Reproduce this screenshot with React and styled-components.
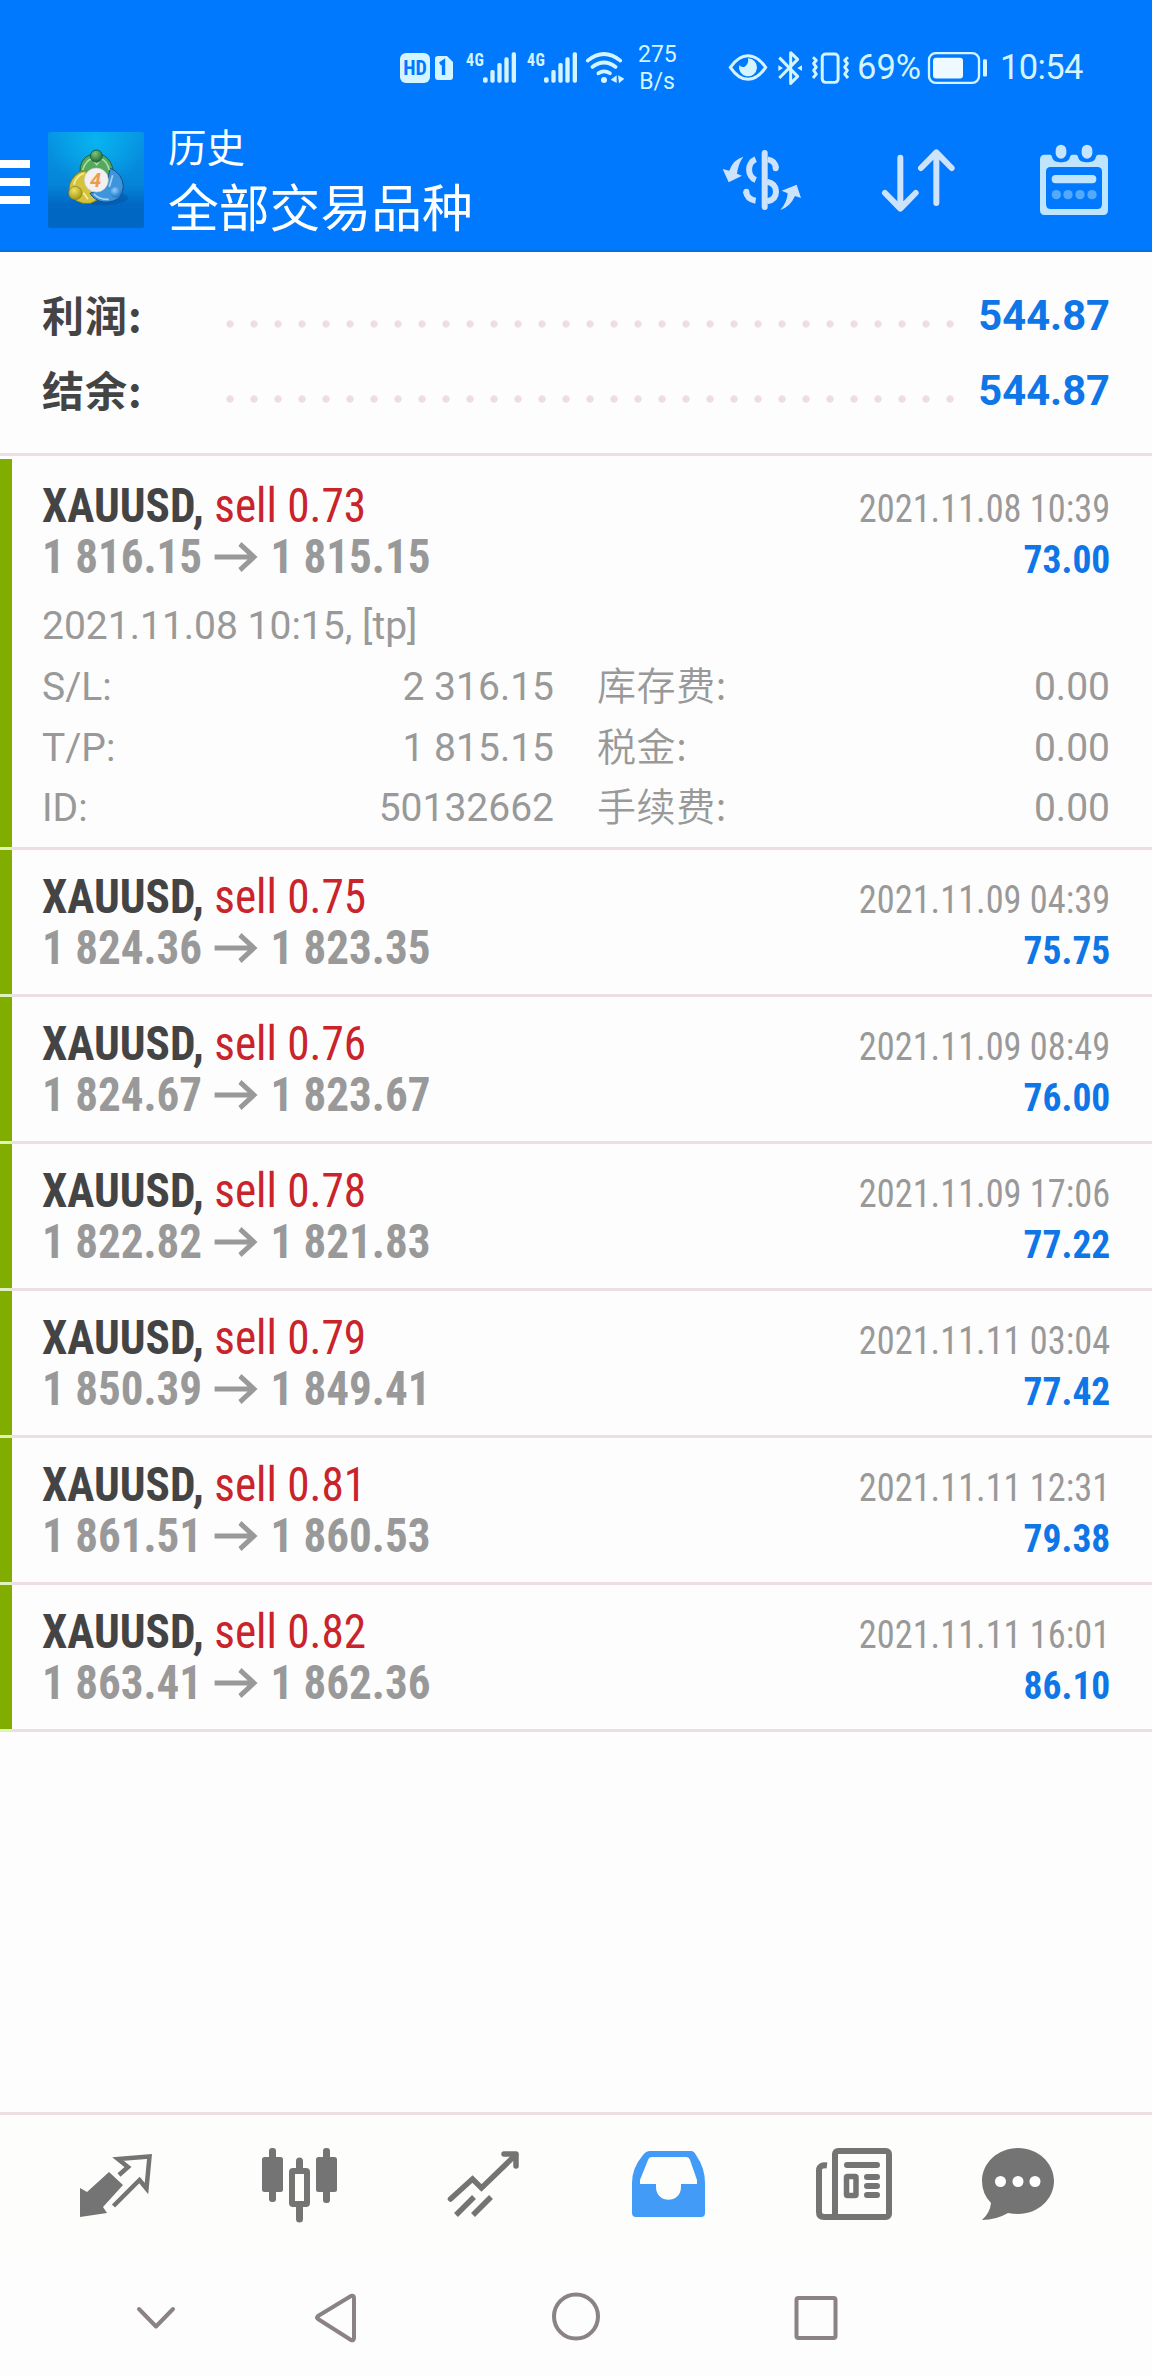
import styled, { createGlobalStyle } from "styled-components";

const GlobalStyle = createGlobalStyle`
  * {
    box-sizing: border-box;
  }
  body {
    margin: 0;
    background-color: #fdfdfd;
    font-family: Roboto, "Noto Sans CJK SC", sans-serif;
  }
  svg {
    display: block;
    flex: none;
    overflow: visible;
  }
`;

const Screen = styled.div`
  width: 1152px;
  height: 2376px;
  display: flex;
  flex-direction: column;
  overflow: hidden;
`;

const Header = styled.header`
  height: 252px;
  background-color: #0079ff;
  border-bottom: 2px solid #0670e0;
`;

const StatusBar = styled.div`
  height: 110px;
  padding: 25px 0 0 400px;
  display: flex;
  align-items: center;
  color: #d4f4ff;
`;

const Slot = styled.div`
  flex: none;
  width: ${(props) => props.$width}px;
  margin-left: ${(props) => props.$gap || 0}px;
  font-size: ${(props) => props.$size || 34.5}px;
  line-height: 1;
  white-space: nowrap;
`;

const Clock = styled(Slot)`
  letter-spacing: -0.6px;
`;

const HdBadge = styled.div`
  width: 30px;
  height: 30px;
  border-radius: 6px;
  background-color: #d4f4ff;
  color: #0079ff;
  font-size: 20px;
  font-weight: 700;
  font-stretch: 75%;
  line-height: 31px;
  text-align: center;
`;

const NetLabel = styled.div`
  padding-bottom: 17px;
  font-weight: 700;
  font-stretch: 75%;
  letter-spacing: 0.5px;
  transform: scaleX(0.84);
  transform-origin: left;
`;

const Speed = styled.div`
  text-align: center;
  line-height: 27px;
`;

const AppBar = styled.div`
  height: 140px;
  display: flex;
  align-items: center;
`;

const Burger = styled.div`
  width: 30px;
  display: grid;
  gap: 10px;
  padding-top: 4px;
  i {
    height: 8px;
    background-color: #fff;
  }
`;

const Logo = styled.svg`
  margin-left: 18px;
`;

const Titles = styled.div`
  width: 579px;
  padding: 0 0 10px 24px;
  color: #fff;
  font-family: "Noto Sans CJK SC", sans-serif;
  line-height: 60px;
`;

const Caption = styled.div`
  font-size: 38.5px;
`;

const Title = styled.div`
  font-size: 50.8px;
`;

const Actions = styled.div`
  display: flex;
  align-items: center;
  gap: 83px;
  svg:nth-child(2) {
    margin: 0 2px 0 -2px;
  }
`;

const Summary = styled.section`
  height: 204px;
  padding: 26px 42px 0;
  border-bottom: 3px solid #eedde3;
`;

const SummaryRow = styled.div`
  height: 75px;
  display: flex;
  align-items: center;
`;

const SummaryLabel = styled.div`
  width: 176px;
  padding-bottom: 4px;
  color: #444;
  font: 700 42px/71px "Noto Sans CJK SC", sans-serif;
  letter-spacing: 1px;
`;

const Dots = styled.div`
  width: 744px;
  height: 8px;
  margin-top: 16px;
  background: radial-gradient(circle, #eedde3 3.3px, transparent 4px) 0 0 / 24px 8px;
`;

const SummaryValue = styled.div`
  flex: 1;
  color: #0e76e6;
  font-size: 41.7px;
  font-weight: 700;
  text-align: right;
`;

const Deals = styled.section`
  flex: 1;
  padding-top: 3px;
`;

const Deal = styled.article`
  height: ${(props) => (props.$open ? 391 : 147)}px;
  padding: 21px 42px 0 30px;
  border-left: 12px solid #80ad00;
  position: relative;
  &::after {
    content: "";
    position: absolute;
    left: -12px;
    right: 0;
    bottom: 0;
    height: 3px;
    background: linear-gradient(to right, #def2bd 12px, #eedde3 12px);
  }
`;

const Line = styled.div`
  height: 51px;
  line-height: 51px;
  display: flex;
  align-items: baseline;
  justify-content: space-between;
  white-space: nowrap;
`;

const Condensed = styled.span`
  display: inline-flex;
  align-items: baseline;
  white-space: pre;
  font-size: ${(props) => props.$size || 48}px;
  font-weight: ${(props) => (props.$bold ? 700 : 400)};
  font-stretch: 75%;
  color: ${(props) => props.$color};
  transform: scaleX(${(props) => props.$scale || 0.938});
  transform-origin: ${(props) => (props.$right ? "right" : "left")};
`;

const Side = styled.span`
  color: #c9232b;
  font-weight: 450;
`;

const Arrow = styled.svg`
  margin: 0 15px 0 13px;
  align-self: center;
`;

const Details = styled.div`
  padding-top: 14px;
  color: #999;
  font-size: 39px;
  line-height: 60.8px;
`;

const DetailGrid = styled.div`
  display: grid;
  grid-template-columns: 1fr 1fr;
  column-gap: 44px;
`;

const Detail = styled.div`
  height: 60.8px;
  display: flex;
  justify-content: space-between;
  align-items: baseline;
`;

const FeeLabel = styled.span`
  margin-left: -1px;
  font-family: "Noto Sans CJK SC", sans-serif;
  font-weight: 350;
  line-height: 40px;
  letter-spacing: 0.6px;
`;

const TabBar = styled.nav`
  height: 147px;
  padding: 31px 0 0 76px;
  display: flex;
  gap: 104px;
  border-top: 3px solid #eedde3;
  background-color: #fdfdfb;
  color: #747474;
`;

const Tab = styled.svg`
  width: 80px;
  height: 78px;
  margin-left: ${(props) => props.$shift || 0}px;
`;

const SystemNav = styled.nav`
  height: 117px;
  padding: 33px 0 0 131px;
  display: flex;
`;

const SystemIcon = styled.svg`
  width: 50px;
  height: 50px;
  margin-left: ${(props) => props.$gap || 0}px;
  fill: none;
  stroke: #8a8283;
  stroke-width: 4;
  stroke-linecap: round;
  stroke-linejoin: round;
`;

const deals = [
  {
    volume: "0.73", from: "1 816.15", to: "1 815.15", time: "2021.11.08 10:39", profit: "73.00",
    opened: "2021.11.08 10:15, [tp]",
    details: [
      ["S/L:", "2 316.15", "库存费:", "0.00"],
      ["T/P:", "1 815.15", "税金:", "0.00"],
      ["ID:", "50132662", "手续费:", "0.00"],
    ],
  },
  { volume: "0.75", from: "1 824.36", to: "1 823.35", time: "2021.11.09 04:39", profit: "75.75" },
  { volume: "0.76", from: "1 824.67", to: "1 823.67", time: "2021.11.09 08:49", profit: "76.00" },
  { volume: "0.78", from: "1 822.82", to: "1 821.83", time: "2021.11.09 17:06", profit: "77.22" },
  { volume: "0.79", from: "1 850.39", to: "1 849.41", time: "2021.11.11 03:04", profit: "77.42" },
  { volume: "0.81", from: "1 861.51", to: "1 860.53", time: "2021.11.11 12:31", profit: "79.38" },
  { volume: "0.82", from: "1 863.41", to: "1 862.36", time: "2021.11.11 16:01", profit: "86.10" },
];

const Signal = () => (
  <>
    <Slot $width={17} $gap={10} $size={19}>
      <NetLabel>4G</NetLabel>
    </Slot>
    <svg width="34" height="31" viewBox="308 65 102 93" fill="currentColor">
      <rect x="308" y="141" width="14" height="16" rx="5" />
      <rect x="330" y="119" width="13" height="38" rx="5" />
      <rect x="351" y="98" width="13" height="59" rx="5" />
      <rect x="372" y="81" width="13" height="76" rx="5" />
      <rect x="394" y="66" width="13" height="91" rx="5" />
    </svg>
  </>
);

const Status = () => (
  <StatusBar>
    <HdBadge>HD</HdBadge>
    <Slot $width={18} $gap={5}>
      <svg width="18" height="24" viewBox="0 0 18 24">
        <path d="M3 0h9l6 6v15a3 3 0 0 1-3 3H3a3 3 0 0 1-3-3V3a3 3 0 0 1 3-3z" fill="currentColor" />
        <path d="M5 8l3.5-2.5V19" fill="none" stroke="#0079ff" strokeWidth="3.4" />
      </svg>
    </Slot>
    <Slot $width={3} />
    <Signal />
    <Signal />
    <Slot $width={38} $gap={8}>
      <svg width="38" height="31" viewBox="618 64 114 93" fill="none" stroke="currentColor" strokeWidth="11" strokeLinecap="round">
        <path d="M623 90q49-40 98 0M637 109q35-27 70 0M655 128q17-12 35 0" />
        <circle cx="672" cy="148" r="9" fill="currentColor" stroke="none" />
        <path d="M692 147l18-13v23zM714 134l19 10-16 14z" fill="currentColor" stroke="none" />
      </svg>
    </Slot>
    <Slot $width={38} $gap={14} $size={23}>
      <Speed>
        275
        <br />
        B/s
      </Speed>
    </Slot>
    <Slot $width={38} $gap={53}>
      <svg width="38" height="27" viewBox="87 70 114 81">
        <path d="M91 110Q115 75 144 75T197 110Q173 146 144 146T91 110z" fill="none" stroke="currentColor" strokeWidth="9" />
        <path d="M144 83a27 27 0 1 1-26 20q6 9 16 5 13-8 10-25z" fill="currentColor" />
      </svg>
    </Slot>
    <Slot $width={24} $gap={11}>
      <svg width="24" height="34" viewBox="233 60 72 102" fill="none" stroke="currentColor" strokeWidth="9" strokeLinejoin="round">
        <path d="M237 80l55 56-21 21V65l21 20-55 56" />
        <path d="M234 103l14 8-14 9zM305 103l-14 8 14 9z" fill="currentColor" stroke="none" />
      </svg>
    </Slot>
    <Slot $width={37} $gap={10}>
      <svg width="37" height="32" viewBox="335 64 112 95" fill="none" stroke="currentColor" strokeWidth="9">
        <rect x="366" y="69" width="48" height="86" rx="10" />
        <path d="M338 79l10 9-8 10 8 11-8 10 8 11-10 12M444 79l-10 9 8 10-8 11 8 10-8 11 10 12" strokeLinejoin="round" />
      </svg>
    </Slot>
    <Slot $width={66} $gap={8}>69%</Slot>
    <Slot $width={60} $gap={5}>
      <svg width="60" height="32" viewBox="684 65 180 95">
        <rect x="687" y="68" width="150" height="89" rx="20" fill="none" stroke="currentColor" strokeWidth="7" />
        <rect x="699" y="82" width="90" height="62" rx="9" fill="#eefaff" />
        <rect x="849" y="86" width="12" height="52" rx="4" fill="currentColor" />
      </svg>
    </Slot>
    <Clock $width={92} $gap={12}>10:54</Clock>
  </StatusBar>
);

const AppLogo = () => (
  <Logo width="96" height="96" viewBox="144 64 288 288">
    <defs>
      <linearGradient id="sky" x2="0" y2="1">
        <stop offset="0" stopColor="#0796e4" />
        <stop offset="0.55" stopColor="#0584d8" />
        <stop offset="0.75" stopColor="#0069c4" />
        <stop offset="1" stopColor="#0067c3" />
      </linearGradient>
      <radialGradient id="glow" cx="0.5" cy="0.1" r="0.5">
        <stop offset="0" stopColor="#08b4ee" />
        <stop offset="1" stopColor="#08b4ee" stopOpacity="0" />
      </radialGradient>
      <radialGradient id="green" cx="0.4" cy="0.3" r="0.7">
        <stop offset="0" stopColor="#7fc47a" />
        <stop offset="1" stopColor="#1f6d3c" />
      </radialGradient>
      <radialGradient id="gold" cx="0.4" cy="0.3" r="0.7">
        <stop offset="0" stopColor="#f3e25c" />
        <stop offset="1" stopColor="#a3981c" />
      </radialGradient>
      <radialGradient id="blue" cx="0.4" cy="0.3" r="0.7">
        <stop offset="0" stopColor="#8fd0fb" />
        <stop offset="1" stopColor="#1a73c8" />
      </radialGradient>
    </defs>
    <rect x="144" y="64" width="288" height="288" rx="6" fill="url(#sky)" />
    <rect x="144" y="64" width="288" height="288" rx="6" fill="url(#glow)" />
    <ellipse cx="300" cy="262" rx="85" ry="22" fill="#05509c" opacity="0.45" />
    <path d="M240 190q-4-48 36-60h26q36 14 38 58l-20 14-60-12z" fill="#55a85c" stroke="#1d6140" strokeWidth="3" />
    <path d="M258 180q-20 0-34 16-20 22-16 50l20 24q20 12 44 8l24-12-30-50z" fill="#d3c43c" stroke="#837c22" strokeWidth="3" />
    <path d="M330 172q38 16 40 56-2 18-10 30-16 18-50 16-26-4-40-26l50-20z" fill="#3f95dc" stroke="#134f8f" strokeWidth="3" />
    <path d="M248 178q10-30 28-34l14 18 14-18q18 8 24 34" fill="none" stroke="#a8dca0" strokeWidth="5" />
    <path d="M222 222q4-24 30-34M250 246l14 20" fill="none" stroke="#f6eda0" strokeWidth="5" />
    <path d="M338 194l-10 34M282 250q16 18 44 16" fill="none" stroke="#a4d6fa" strokeWidth="5" />
    <circle cx="289" cy="136" r="18" fill="url(#green)" stroke="#1d6140" strokeWidth="3" />
    <circle cx="226" cy="247" r="20" fill="url(#gold)" stroke="#837c22" strokeWidth="2" />
    <circle cx="347" cy="245" r="16" fill="url(#blue)" />
    <circle cx="289" cy="208" r="36" fill="#f3f0ef" stroke="#c4cbd0" strokeWidth="2" />
    <text x="287" y="229" textAnchor="middle" fontSize="60" fontWeight="700" fontStyle="italic" fill="#ef9a4c">4</text>
  </Logo>
);

const HeaderActions = () => (
  <Actions>
    <svg width="78" height="60" viewBox="130 84 234 180" fill="none" stroke="#cde2fb" strokeWidth="18">
      <path d="M255 93v162" strokeLinecap="round" />
      <path d="M228 112a30 33 0 0 0 0 62M228 236q-26-4-29-27M264 112q23 4 25 27" />
      <path d="M200 209v1M288 138v1" strokeLinecap="round" />
      <path d="M262 179q27 6 27 30t-27 29" />
      <path d="M191 104q-30 8-42 42l-20-5 18 40 40-20-15-6q3-28 19-51z" fill="#cde2fb" stroke="none" />
      <path d="M302 264q30-10 44-42l18 6-13-40-45 18 18 8q-2 28-22 50z" fill="#cde2fb" stroke="none" />
    </svg>
    <svg width="73" height="63" viewBox="605 84 219 189" fill="none" stroke="#cde2fb" strokeWidth="18" strokeLinecap="round" strokeLinejoin="round">
      <path d="M660 110v152M614 216l46 47 46-47M768 246V95M722 141l46-47 46 47" />
    </svg>
    <svg width="68" height="70" viewBox="1080 72 204 210">
      <path
        d="M1094 101h14c8 0 8 6 10 12 6 14 44 14 50 0 2-8 4-12 10-12h8c8 0 8 6 10 12 6 14 44 14 50 0 2-8 4-12 10-12h14q14 0 14 14v153q0 14-14 14h-176q-14 0-14-14V115q0-14 14-14zM1112 138q-14 0-14 14v96q0 16 14 16h140q14 0 14-16v-96q0-14-14-14z"
        fill="#bfe4fd"
        fillRule="evenodd"
      />
      <rect x="1127" y="71" width="32" height="42" rx="16" fill="#c5e4fd" />
      <rect x="1205" y="71" width="32" height="42" rx="16" fill="#c5e4fd" />
      <rect x="1115" y="162" width="134" height="25" rx="12" fill="#bfe4fd" />
      <g fill="#55a9fb">
        <circle cx="1129" cy="221" r="14" />
        <circle cx="1164" cy="221" r="14" />
        <circle cx="1200" cy="221" r="14" />
        <circle cx="1236" cy="221" r="14" />
      </g>
    </svg>
  </Actions>
);

const DealRow = ({ deal }) => (
  <Deal $open={Boolean(deal.details)}>
    <Line>
      <Condensed $bold $color="#444" $scale={0.942}>
        XAUUSD, <Side>sell {deal.volume}</Side>
      </Condensed>
      <Condensed $size={39.5} $color="#999" $scale={0.92} $right>
        {deal.time}
      </Condensed>
    </Line>
    <Line>
      <Condensed $bold $color="#999">
        {deal.from}
        <Arrow width="45" height="30" viewBox="0 0 45 30" fill="none" stroke="currentColor" strokeWidth="5">
          <path d="M0 15h42M27 2l15 13-15 13" />
        </Arrow>
        {deal.to}
      </Condensed>
      <Condensed $bold $size={39.5} $color="#0e76e6" $scale={0.95} $right>
        {deal.profit}
      </Condensed>
    </Line>
    {deal.details && (
      <Details>
        {deal.opened}
        <DetailGrid>
          {deal.details.map(([key, value, fee, amount]) => [
            <Detail key={key}>
              <span>{key}</span>
              <span>{value}</span>
            </Detail>,
            <Detail key={fee}>
              <FeeLabel>{fee}</FeeLabel>
              <span>{amount}</span>
            </Detail>,
          ])}
        </DetailGrid>
      </Details>
    )}
  </Deal>
);

const Tabs = () => (
  <TabBar>
    <Tab viewBox="76 46 80 78">
      <path d="M80 88l7 4 22-20 14 13-20 22 4 6-27 4z" fill="currentColor" />
      <path d="M119 75l9-8-10-8 31.500-2.500-3 32-7-8.500-26 26" fill="none" stroke="currentColor" strokeWidth="4.500" />
    </Tab>
    <Tab viewBox="260 46 80 78" fill="currentColor">
      <rect x="262" y="57" width="21" height="35" rx="2.500" />
      <rect x="269" y="48" width="7" height="54" rx="3" />
      <rect x="316" y="57" width="21" height="35" rx="2.500" />
      <rect x="323" y="48" width="7" height="55" rx="3" />
      <path d="M299.500 61v8M299.500 106v13" stroke="currentColor" strokeWidth="7" strokeLinecap="round" />
      <rect x="292" y="71" width="15" height="33" rx="1" fill="none" stroke="currentColor" strokeWidth="6" />
    </Tab>
    <Tab viewBox="444 46 80 78" fill="none" stroke="currentColor" strokeWidth="5.500">
      <path d="M450.500 99l22-20 9 9 34-33" strokeLinecap="round" />
      <path d="M504 54h12v12" strokeLinecap="round" strokeLinejoin="round" />
      <path d="M456 115l18-18M473 115l18-18" />
    </Tab>
    <Tab viewBox="628 46 80 78">
      <path
        d="M650 51h41q3 0 5 4 9 13 9 28v30q0 4-4 4h-65q-4 0-4-4V83q0-15 11-28 3-4 7-4zM652 57q-3 0-4 3l-8 20v4h16v3c0 17 25 17 25 0v-3h16v-4l-7-20q-1-3-4-3z"
        fill="#429bf6"
        fillRule="evenodd"
      />
    </Tab>
    <Tab viewBox="812 46 80 78" fill="none" stroke="currentColor" strokeWidth="6">
      <rect x="835" y="51" width="54" height="66" rx="3" />
      <path d="M827 65.500q-8-1-8 5V112q0 5 5 5h14" />
      <path d="M847 65h30M867 77h10M867 86h10M867 95h10" strokeLinecap="round" />
      <rect x="846.500" y="76.500" width="9.500" height="19" rx="1" strokeWidth="5.500" />
    </Tab>
    <Tab viewBox="980 46 80 78" $shift={-16}>
      <path d="M1018 48c20 0 36 15 36 33s-16 33-36 33q-5 0-10-1-12 7-26 7 8-7 9-17-9-9-9-22c0-18 16-33 36-33z" fill="currentColor" />
      <g fill="#fff">
        <circle cx="1000.500" cy="81.500" r="5.500" />
        <circle cx="1018" cy="81.500" r="5.500" />
        <circle cx="1035" cy="81.500" r="5.500" />
      </g>
    </Tab>
  </TabBar>
);

const App = () => {
  return (
    <Screen>
      <GlobalStyle />
      <Header>
        <Status />
        <AppBar>
          <Burger>
            <i />
            <i />
            <i />
          </Burger>
          <AppLogo />
          <Titles>
            <Caption>历史</Caption>
            <Title>全部交易品种</Title>
          </Titles>
          <HeaderActions />
        </AppBar>
      </Header>
      <Summary>
        {["利润:", "结余:"].map((label) => (
          <SummaryRow key={label}>
            <SummaryLabel>{label}</SummaryLabel>
            <Dots />
            <SummaryValue>544.87</SummaryValue>
          </SummaryRow>
        ))}
      </Summary>
      <Deals>
        {deals.map((deal) => (
          <DealRow key={deal.time} deal={deal} />
        ))}
      </Deals>
      <Tabs />
      <SystemNav>
        <SystemIcon viewBox="131 192 50 50">
          <path d="M139 209l17 17.500 17-17.500" />
        </SystemIcon>
        <SystemIcon viewBox="311 192 50 50" $gap={130}>
          <path d="M318 216q-2 1.500 0 3l33 21q3 1 3-2v-40q0-3-3-2z" />
        </SystemIcon>
        <SystemIcon viewBox="551 192 50 50" $gap={190}>
          <circle cx="576" cy="216.500" r="22" />
        </SystemIcon>
        <SystemIcon viewBox="791 192 50 50" $gap={190}>
          <rect x="796.500" y="198" width="39" height="40" rx="2" />
        </SystemIcon>
      </SystemNav>
    </Screen>
  );
};

export default App;
